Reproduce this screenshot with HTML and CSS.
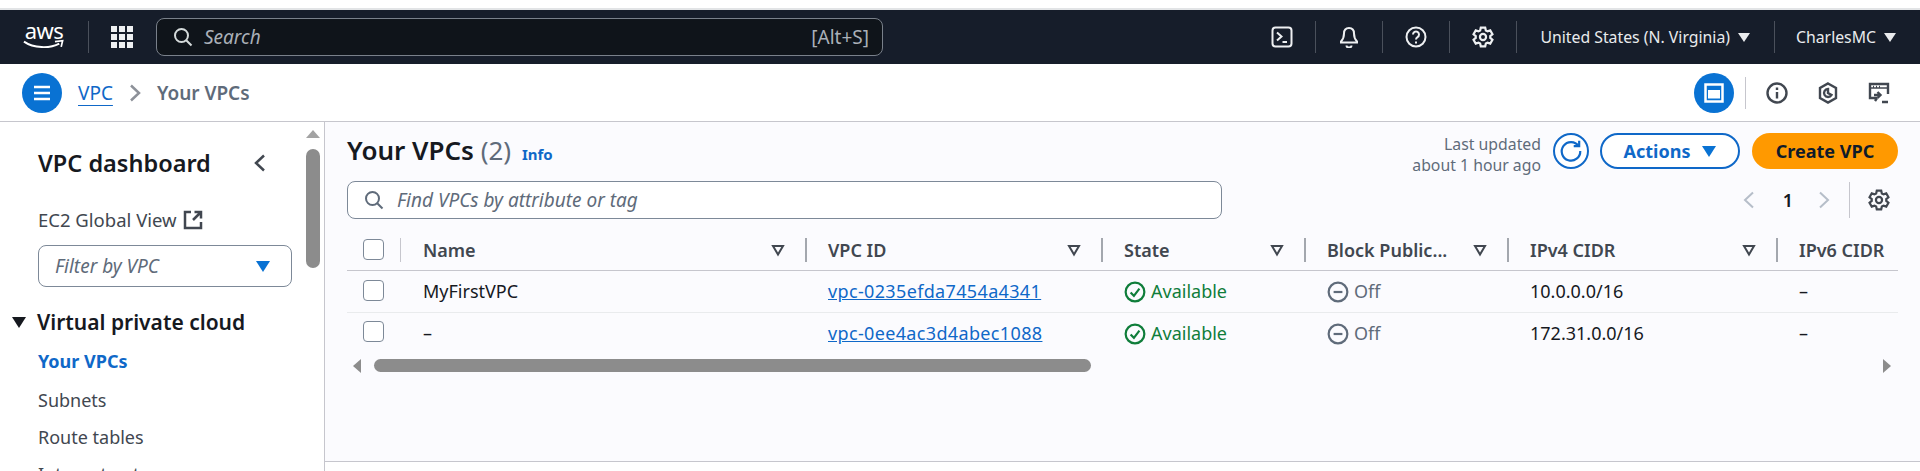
FILE: index.html
```html
<!DOCTYPE html>
<html lang="en">
<head>
  <meta charset="UTF-8" />
  <title>Your VPCs</title>
  <link rel="stylesheet" href="styles.css">
</head>
<body>
  <svg class="sprites" width="0" height="0">
    <symbol id="search" viewBox="0 0 20 20"><circle cx="8.5" cy="8.5" r="6.5"/><path d="M13.2 13.2 18.5 18.5"/></symbol>
    <symbol id="gear" viewBox="0 0 20 20"><path d="M8 1.5h4l.6 2.6 1.5.8 2.5-.9 2 3.5-2 1.7v1.6l2 1.7-2 3.5-2.5-.9-1.5.8-.6 2.6H8l-.6-2.6-1.5-.8-2.5.9-2-3.5 2-1.7V9.200l-2-1.700 2-3.500 2.500.9 1.500-.8z"/><circle cx="10" cy="10" r="2.800"/></symbol>
    <symbol id="filter" viewBox="0 0 14 14"><path d="M2 3h10L7 11.500z"/></symbol>
    <symbol id="check" viewBox="0 0 20 20"><circle cx="10" cy="10" r="8.500"/><path d="M6 10.500 9 13.500 14 7"/></symbol>
    <symbol id="off" viewBox="0 0 20 20"><circle cx="10" cy="10" r="8.500"/><path d="M6 10h8"/></symbol>
  </svg>

  <header class="topnav">
    <div class="aws-logo">
      <span>aws</span>
      <svg viewBox="0 0 44 11" width="42" height="11"><path d="M1 2.500C11 9.500 28 10 38 4.500" fill="none" stroke="#fff" stroke-width="2"/><path d="M33.500 2.500 41.500 1.500 40 8" fill="none" stroke="#fff" stroke-width="1.800"/></svg>
    </div>
    <span class="nav-sep sep-logo"></span>
    <svg class="grid-icon" viewBox="0 0 24 24" width="24" height="24"><path d="M1 1h6v6H1zM9 1h6v6H9zM17 1h6v6h-6zM1 9h6v6H1zM9 9h6v6H9zM17 9h6v6h-6zM1 17h6v6H1zM9 17h6v6H9zM17 17h6v6h-6z"/></svg>
    <div class="nav-search">
      <svg class="icon nav-search-icon"><use href="#search"/></svg>
      <span class="nav-search-text">Search</span>
      <span class="nav-search-key">[Alt+S]</span>
    </div>
    <div class="nav-right">
      <svg class="icon nav-icon" viewBox="0 0 22 22"><rect x="1.500" y="1.500" width="19" height="19" rx="3"/><path d="M6 6.500 10.500 10.500 6 14.500M11.500 16H16"/></svg>
      <span class="nav-sep"></span>
      <svg class="icon nav-icon" viewBox="0 0 22 22"><path d="M11 2c-3.500 0-5 2.500-5 5.500 0 4-1 6-3 8v1h16v-1c-2-2-3-4-3-8C16 4.500 14.500 2 11 2z"/><path d="M8.500 19.500a2.500 2 0 0 0 5 0"/></svg>
      <span class="nav-sep"></span>
      <svg class="icon nav-icon" viewBox="0 0 22 22"><circle cx="11" cy="11" r="9.500"/><path d="M8 8.500a3 3 0 1 1 4.500 2.600c-1 .6-1.500 1.100-1.500 2.400M11 15.500v2"/></svg>
      <span class="nav-sep"></span>
      <svg class="icon nav-icon"><use href="#gear"/></svg>
      <span class="nav-sep"></span>
      <span class="nav-menu region">United States (N. Virginia)<i class="caret"></i></span>
      <span class="nav-sep"></span>
      <span class="nav-menu user">CharlesMC<i class="caret"></i></span>
    </div>
  </header>

  <div class="crumbbar">
    <button class="round-btn"><svg viewBox="0 0 20 20" width="20" height="20"><path d="M2 4h16M2 10h16M2 16h16"/></svg></button>
    <a class="crumb-link" href="#">VPC</a>
    <svg class="crumb-chevron" viewBox="0 0 12 18" width="12" height="18"><path d="M2 1.500 10 9 2 16.500"/></svg>
    <span class="crumb-current">Your VPCs</span>
    <div class="crumb-tools">
      <button class="round-btn"><svg viewBox="0 0 20 20" width="20" height="20"><rect x="1.500" y="1.500" width="17" height="17"/><rect class="solid" x="4" y="7" width="12" height="8.500"/></svg></button>
      <span class="tool-sep"></span>
      <svg class="icon tool-icon" viewBox="0 0 22 22"><circle cx="11" cy="11" r="9.500"/><path d="M11 10v6.500M11 5.500v2.500"/></svg>
      <svg class="icon tool-icon" viewBox="0 0 22 22"><path d="M11 1.500 19 6v10l-8 4.500L3 16V6z"/><path d="M11 7a4 4 0 1 0 3.500 6L11 11z"/></svg>
      <svg class="icon tool-icon" viewBox="0 0 22 22"><path d="M9 16H2V2h18v10"/><path d="M2 6h18M5 4.500h1M8 4.500h1M11 4.500h1" stroke-width="1.500"/><path d="M6 13h6M9.500 10l3 3-3 3M7 19l2-3M14 20h6"/></svg>
    </div>
  </div>

  <div class="main">
    <aside class="sidebar">
      <div class="side-content">
        <div class="side-head">
          <h2>VPC dashboard</h2>
          <svg class="side-close" viewBox="0 0 12 18" width="12" height="18"><path d="M10 1.500 2 9l8 7.500"/></svg>
        </div>
        <div class="side-ec2">EC2 Global View
          <svg class="icon" viewBox="0 0 20 20" width="20" height="20"><path d="M8 2H2v16h16v-6"/><path d="M10 10 18 2M11.500 2H18v6.500"/></svg>
        </div>
        <div class="side-filter"><span>Filter by VPC</span><i class="caret blue"></i></div>
        <div class="side-group"><i class="caret dark"></i>Virtual private cloud</div>
        <ul class="side-links">
          <li class="active">Your VPCs</li>
          <li>Subnets</li>
          <li>Route tables</li>
          <li>Internet gateways</li>
        </ul>
      </div>
      <div class="side-scroll">
        <i class="arrow-up"></i>
        <div class="side-thumb"></div>
      </div>
    </aside>

    <section class="content">
      <div class="title-row">
        <h1>Your VPCs <span class="count">(2)</span> <a class="info" href="#">Info</a></h1>
        <div class="title-actions">
          <div class="updated">Last updated<br>about 1 hour ago</div>
          <button class="refresh"><svg class="icon" viewBox="0 0 22 22" width="24" height="24"><path d="M18 6.500A8.500 8.500 0 1 0 19.500 11"/><path d="M13.500 6.500H18.500V1.500"/></svg></button>
          <button class="btn-actions">Actions<i class="caret blue"></i></button>
          <button class="btn-create">Create VPC</button>
        </div>
      </div>

      <div class="filter-row">
        <div class="find-box">
          <svg class="icon find-icon"><use href="#search"/></svg>
          <span>Find VPCs by attribute or tag</span>
        </div>
        <div class="pager">
          <svg class="pager-arrow" viewBox="0 0 12 18" width="12" height="18"><path d="M10 1.500 2 9l8 7.500"/></svg>
          <b>1</b>
          <svg class="pager-arrow" viewBox="0 0 12 18" width="12" height="18"><path d="M2 1.500 10 9 2 16.500"/></svg>
          <span class="pager-sep"></span>
          <svg class="icon pager-gear"><use href="#gear"/></svg>
        </div>
      </div>

      <div class="table-wrap">
        <table>
          <colgroup>
            <col class="c-check"><col class="c-name"><col class="c-id"><col class="c-state"><col class="c-block"><col class="c-ipv4"><col class="c-ipv6">
          </colgroup>
          <thead>
            <tr>
              <th><i class="box"></i></th>
              <th><div class="th-in th-first">Name<svg class="sort"><use href="#filter"/></svg></div></th>
              <th><div class="th-in">VPC ID<svg class="sort"><use href="#filter"/></svg></div></th>
              <th><div class="th-in">State<svg class="sort"><use href="#filter"/></svg></div></th>
              <th><div class="th-in">Block Public...<svg class="sort"><use href="#filter"/></svg></div></th>
              <th><div class="th-in">IPv4 CIDR<svg class="sort"><use href="#filter"/></svg></div></th>
              <th><div class="th-in">IPv6 CIDR</div></th>
            </tr>
          </thead>
          <tbody>
            <tr>
              <td><i class="box"></i></td>
              <td>MyFirstVPC</td>
              <td><a href="#">vpc-0235efda7454a4341</a></td>
              <td class="ok"><svg class="status"><use href="#check"/></svg>Available</td>
              <td class="muted"><svg class="status"><use href="#off"/></svg>Off</td>
              <td>10.0.0.0/16</td>
              <td>–</td>
            </tr>
            <tr>
              <td><i class="box"></i></td>
              <td>–</td>
              <td><a href="#">vpc-0ee4ac3d4abec1088</a></td>
              <td class="ok"><svg class="status"><use href="#check"/></svg>Available</td>
              <td class="muted"><svg class="status"><use href="#off"/></svg>Off</td>
              <td>172.31.0.0/16</td>
              <td>–</td>
            </tr>
          </tbody>
        </table>
        <div class="h-scroll">
          <i class="arrow-left"></i>
          <div class="h-track"><div class="h-thumb"></div></div>
          <i class="arrow-right"></i>
        </div>
      </div>
      <div class="bottom-line"></div>
    </section>
  </div>
</body>
</html>
```

FILE: styles.css
```css
* {
  box-sizing: border-box;
}
html, body {
  height: 100%;
}
body {
  margin: 0;
  overflow: hidden;
  font-family: "Noto Sans", Arial, sans-serif;
  font-size: 18px;
  color: #16191f;
  background: #fff;
  padding-top: 8px;
  display: flex;
  flex-direction: column;
}
button {
  font-family: inherit;
  cursor: pointer;
}
i {
  display: inline-block;
}
a {
  color: #0f68c8;
}
.sprites {
  position: absolute;
}
.icon {
  fill: none;
  stroke: currentColor;
  stroke-width: 2;
}

/* top nav */
.topnav {
  height: 56px;
  flex: none;
  border-top: 2px solid #e2e4e6;
  background: #161d2a;
  color: #e9ebed;
  display: flex;
  align-items: center;
  padding-left: 23px;
}
.aws-logo {
  width: 42px;
  height: 36px;
  display: flex;
  flex-direction: column;
  align-items: center;
  margin-top: -3px;
  color: #fff;
}
.aws-logo span {
  font-size: 22px;
  line-height: 24px;
  letter-spacing: -0.5px;
}
.aws-logo svg {
  margin-top: -3px;
}
.nav-sep {
  width: 1px;
  height: 32px;
  background: #4a505b;
}
.sep-logo {
  margin-left: 23px;
}
.grid-icon {
  margin-left: 21px;
  fill: #eef0f2;
}
.nav-search {
  margin-left: 22px;
  width: 727px;
  height: 38px;
  border: 1.5px solid #79808a;
  border-radius: 8px;
  background: #0f141a;
  display: flex;
  align-items: center;
  padding: 0 13px 0 16px;
}
.nav-search-icon {
  width: 20px;
  height: 20px;
  color: #d5dbdb;
}
.nav-search-text {
  margin-left: 11px;
  font-size: 19px;
  font-style: italic;
  color: #aab0b8;
}
.nav-search-key {
  margin-left: auto;
  font-size: 19px;
  color: #aab0b8;
}
.nav-right {
  margin-left: auto;
  display: flex;
  align-items: center;
}
.nav-icon {
  width: 22px;
  height: 22px;
  margin: 0 22px;
  color: #eef0f2;
}
.nav-menu {
  display: flex;
  align-items: center;
  font-size: 15.800px;
  white-space: nowrap;
}
.region {
  padding: 0 24px 0 23px;
}
.user {
  padding: 0 24px 0 21px;
}
.caret {
  width: 0;
  height: 0;
  border-left: 6px solid transparent;
  border-right: 6px solid transparent;
  border-top: 9px solid #e9ebed;
  margin-left: 8px;
}

/* breadcrumbs */
.crumbbar {
  height: 58px;
  flex: none;
  display: flex;
  align-items: center;
  padding-left: 22px;
  border-bottom: 1px solid #c6c6cd;
}
.round-btn {
  width: 40px;
  height: 40px;
  padding: 0;
  border: 0;
  border-radius: 50%;
  background: #0972d3;
  display: flex;
  align-items: center;
  justify-content: center;
}
.round-btn svg {
  fill: none;
  stroke: #fff;
  stroke-width: 2.500;
}
.round-btn .solid {
  fill: #fff;
  stroke: none;
}
.crumb-link {
  margin-left: 16px;
  font-size: 19px;
  text-decoration-thickness: 1px;
  text-underline-offset: 5px;
}
.crumb-chevron {
  margin-left: 16px;
  fill: none;
  stroke: #8d9199;
  stroke-width: 2.500;
}
.crumb-current {
  margin-left: 16px;
  font-size: 19px;
  font-weight: 600;
  color: #5f6b7a;
}
.crumb-tools {
  margin-left: auto;
  display: flex;
  align-items: center;
  padding-right: 30px;
}
.tool-sep {
  width: 1px;
  height: 32px;
  background: #c6c6cd;
  margin: 0 20px 0 11px;
}
.tool-icon {
  width: 22px;
  height: 22px;
  margin-right: 29px;
  color: #414750;
  stroke-width: 2.400;
}
.tool-icon:last-child {
  margin-right: 0;
}

/* sidebar */
.main {
  flex: 1;
  min-height: 0;
  display: flex;
}
.sidebar {
  width: 325px;
  flex: none;
  display: flex;
  border-right: 1px solid #c6c6cd;
  overflow: hidden;
}
.side-content {
  width: 306px;
  flex: none;
}
.side-head {
  display: flex;
  align-items: center;
  padding: 24px 0 0 38px;
  height: 58px;
}
.side-head h2 {
  margin: 0;
  font-size: 23.500px;
  font-weight: 600;
  line-height: 30px;
}
.side-close {
  margin-left: auto;
  margin-right: 40px;
  fill: none;
  stroke: #414750;
  stroke-width: 2.500;
}
.side-ec2 {
  margin-top: 28px;
  padding-left: 38px;
  font-size: 18.500px;
  line-height: 24px;
  color: #414750;
  display: flex;
  align-items: center;
  gap: 6px;
}
.side-ec2 .icon {
  stroke-width: 2.500;
}
.side-filter {
  margin: 13px 0 0 38px;
  width: 254px;
  height: 42px;
  border: 1px solid #7d8998;
  border-radius: 8px;
  display: flex;
  align-items: center;
  justify-content: space-between;
  padding: 0 21px 0 16px;
  font-size: 19px;
  font-style: italic;
  color: #5f6b7a;
}
.caret.blue {
  border-left-width: 7px;
  border-right-width: 7px;
  border-top: 11px solid #0972d3;
}
.caret.dark {
  border-left-width: 7.500px;
  border-right-width: 7.500px;
  border-top: 11px solid #16191f;
  margin: 0 11px 0 12px;
}
.side-group {
  margin-top: 21px;
  display: flex;
  align-items: center;
  font-size: 21px;
  font-weight: 600;
  line-height: 28px;
}
.side-links {
  list-style: none;
  margin: 13px 0 0;
  padding: 0 0 0 38px;
  color: #414750;
}
.side-links li {
  height: 37px;
  line-height: 24px;
}
.side-links .active {
  height: 39px;
  font-weight: 700;
  color: #0f68c8;
}
.side-scroll {
  width: 14px;
  padding-top: 8px;
}
.arrow-up {
  display: block;
  width: 0;
  border-left: 7px solid transparent;
  border-right: 7px solid transparent;
  border-bottom: 8px solid #a3a3a3;
}
.side-thumb {
  width: 14px;
  height: 119px;
  margin-top: 11px;
  border-radius: 7px;
  background: #8c8c8c;
}

/* content */
.content {
  flex: 1;
  min-width: 0;
  background: #fbfbfe;
  display: flex;
  flex-direction: column;
  padding: 10px 22px 0 22px;
}
.title-row {
  height: 38px;
  display: flex;
  align-items: center;
  justify-content: space-between;
}
h1 {
  margin: 0;
  padding-top: 1px;
  font-size: 26px;
  font-weight: 600;
  line-height: 34px;
  white-space: nowrap;
}
.count {
  font-weight: 400;
  color: #5f6b7a;
}
.info {
  margin-left: 4px;
  font-size: 15px;
  font-weight: 700;
  text-decoration: none;
}
.title-actions {
  display: flex;
  align-items: center;
}
.updated {
  text-align: right;
  font-size: 15.800px;
  line-height: 21px;
  color: #5f6b7a;
  margin: 7px 12px 0 0;
}
.refresh {
  width: 36px;
  height: 36px;
  padding: 0;
  border: 2px solid #0f68c8;
  border-radius: 50%;
  background: #fff;
  color: #0f68c8;
  display: flex;
  align-items: center;
  justify-content: center;
  margin-right: 11px;
}
.btn-actions, .btn-create {
  height: 36px;
  border-radius: 18px;
  font-size: 18px;
  font-weight: 700;
  display: flex;
  align-items: center;
  justify-content: center;
  padding: 0;
}
.btn-actions {
  width: 140px;
  border: 2px solid #0f68c8;
  background: #fff;
  color: #0f68c8;
}
.btn-actions .caret {
  margin-left: 12px;
}
.btn-create {
  width: 146px;
  margin-left: 12px;
  border: 0;
  background: #ff9900;
  color: #0f1b2a;
}
.filter-row {
  margin-top: 11px;
  display: flex;
  align-items: center;
  justify-content: space-between;
}
.find-box {
  width: 875px;
  height: 38px;
  border: 1px solid #7d8998;
  border-radius: 8px;
  background: #fff;
  display: flex;
  align-items: center;
  padding-left: 16px;
  font-size: 19px;
  font-style: italic;
  color: #5f6b7a;
}
.find-icon {
  width: 20px;
  height: 20px;
  margin-right: 13px;
}
.pager {
  display: flex;
  align-items: center;
  height: 38px;
  padding-right: 8px;
}
.pager-arrow {
  fill: none;
  stroke: #b6bec9;
  stroke-width: 2;
}
.pager b {
  margin: 0 25px 0 28px;
  font-weight: 600;
}
.pager-sep {
  width: 1px;
  height: 36px;
  background: #c6c6cd;
  margin: 0 18px 0 19px;
}
.pager-gear {
  width: 22px;
  height: 22px;
  color: #414750;
}

/* table */
.table-wrap {
  margin-top: 12px;
  overflow: hidden;
}
table {
  width: 1641px;
  table-layout: fixed;
  border-collapse: collapse;
}
.c-check { width: 53px; }
.c-name { width: 405px; }
.c-id { width: 296px; }
.c-state { width: 203px; }
.c-block { width: 203px; }
.c-ipv4 { width: 269px; }
.c-ipv6 { width: 212px; }
th {
  height: 39px;
  padding: 0;
  text-align: left;
  font-weight: 600;
  color: #414750;
  border-bottom: 1px solid #c6c6cd;
  white-space: nowrap;
}
td {
  height: 42px;
  padding: 0 0 0 23px;
  border-bottom: 1px solid #e9ebed;
  white-space: nowrap;
}
td a {
  letter-spacing: 0.350px;
}
tbody tr:last-child td {
  height: 41px;
  border-bottom: 0;
}
th:first-child, td:first-child {
  padding-left: 16px;
}
.th-in {
  height: 24px;
  padding-left: 21px;
  padding-right: 20px;
  border-left: 2px solid #a3a7ae;
  display: flex;
  align-items: center;
  justify-content: space-between;
}
.th-first {
  padding-left: 22px;
  border-left: 1px solid #c6c6cd;
}
.sort {
  width: 14px;
  height: 14px;
  fill: none;
  stroke: #414750;
  stroke-width: 2;
}
.box {
  display: block;
  width: 21px;
  height: 21px;
  margin-top: -2px;
  border: 1px solid #7d8998;
  border-radius: 4px;
  background: #fff;
}
.status {
  width: 22px;
  height: 22px;
  fill: none;
  stroke: currentColor;
  stroke-width: 2;
  vertical-align: -5px;
  margin-right: 5px;
}
.ok {
  color: #0f7d3a;
}
.muted {
  color: #5f6b7a;
}

/* table scrollbar */
.h-scroll {
  height: 25px;
  display: flex;
  align-items: center;
  padding: 0 7px 0 6px;
}
.h-track {
  flex: 1;
  padding: 0 13px;
}
.h-thumb {
  width: 717px;
  height: 13px;
  border-radius: 7px;
  background: #8c8c8c;
}
.arrow-left, .arrow-right {
  width: 0;
  border-top: 7px solid transparent;
  border-bottom: 7px solid transparent;
}
.arrow-left {
  border-right: 8px solid #8c8c8c;
}
.arrow-right {
  border-left: 8px solid #8c8c8c;
}
.bottom-line {
  flex: 1;
  margin: 83px -22px 0;
  border-top: 1px solid #c6c6cd;
  background: #fff;
}
```
